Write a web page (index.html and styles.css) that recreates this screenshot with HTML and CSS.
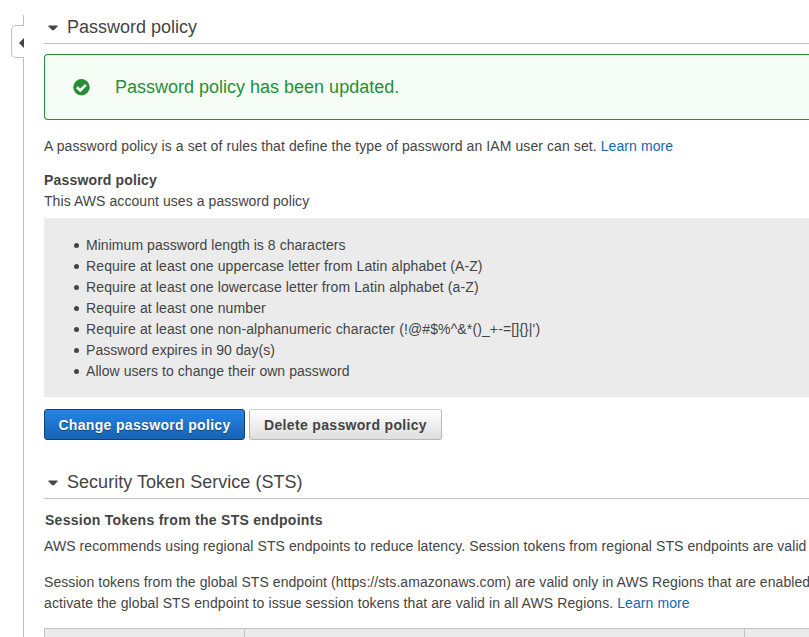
FILE: index.html
```html
<!DOCTYPE html>
<html lang="en">
<head>
<meta charset="utf-8">
<title>Account settings</title>
<link rel="stylesheet" href="styles.css">
</head>
<body>
<div class="page">
  <aside class="rail">
    <div class="rail-top"></div>
    <div class="rail-toggle"><svg width="5" height="10" viewBox="0 0 5 10"><path d="M5 0v10L0 5z" fill="#444"/></svg></div>
    <div class="rail-line"></div>
  </aside>
  <main class="content">
    <h2 class="section-title"><svg class="caret" width="10" height="6" viewBox="0 0 10 6"><path d="M.5 .5h9v1L5.800 5.300H4.200L.5 1.500z" fill="#444"/></svg><span>Password policy</span></h2>
    <div class="alert">
      <svg class="check" width="17" height="17" viewBox="0 0 17 17"><circle cx="8.500" cy="8.200" r="8.200" fill="#258f35"/><path d="M3.900 8.300l3.300 3.200 5.700-5.700" fill="none" stroke="#f6fdf6" stroke-width="2.600"/></svg>
      <span>Password policy has been updated.</span>
    </div>
    <p class="intro">A password policy is a set of rules that define the type of password an IAM user can set. <a>Learn more</a></p>
    <h3 class="label policy-label">Password policy</h3>
    <p class="uses">This AWS account uses a password policy</p>
    <ul class="rules">
      <li class="snug">Minimum password length is 8 characters</li>
      <li>Require at least one uppercase letter from Latin alphabet (A-Z)</li>
      <li>Require at least one lowercase letter from Latin alphabet (a-Z)</li>
      <li>Require at least one number</li>
      <li>Require at least one non-alphanumeric character (!@#$%^&amp;*()_+-=[]{}|')</li>
      <li class="snug">Password expires in 90 day(s)</li>
      <li class="snug">Allow users to change their own password</li>
    </ul>
    <div class="actions">
      <button class="btn primary">Change password policy</button>
      <button class="btn secondary">Delete password policy</button>
    </div>
    <h2 class="section-title sts-title"><svg class="caret" width="10" height="6" viewBox="0 0 10 6"><path d="M.5 .5h9v1L5.800 5.300H4.200L.5 1.500z" fill="#444"/></svg><span>Security Token Service (STS)</span></h2>
    <h3 class="label session-label">Session Tokens from the STS endpoints</h3>
    <p class="sts-intro">AWS recommends using regional STS endpoints to reduce latency. Session tokens from regional STS endpoints are valid</p>
    <p class="sts-global"><span class="sts-scope">Session tokens from the global STS endpoint (https://sts.amazonaws.com) are valid only in AWS Regions that are enabled</span><br>activate the global STS endpoint to issue session tokens that are valid in all AWS Regions. <a>Learn more</a></p>
    <div class="table-head"><div></div><div></div><div></div></div>
  </main>
</div>
</body>
</html>
```
FILE: styles.css
```css
* { box-sizing: border-box; }
body {
  margin: 0;
  height: 637px;
  overflow: hidden;
  background: #fff;
  color: #444;
  font: 14px/21px "Liberation Sans", Arial, sans-serif;
}
.page { display: flex; height: 637px; overflow: hidden; }
.rail { width: 24px; flex: none; display: flex; flex-direction: column; padding-top: 15px; }
.rail-top { height: 10px; border-right: 1px solid #c1c1c1; }
.rail-toggle {
  width: 13px;
  height: 33px;
  margin-left: 11px;
  border: 1px solid #c1c1c1;
  border-right: 0;
  border-radius: 5px 0 0 5px;
  display: flex;
  align-items: center;
  justify-content: flex-end;
  padding-top: 3px;
}
.rail-line { flex: 1; border-right: 1px solid #c1c1c1; }
.content { flex: 1; min-width: 0; margin-left: 20px; overflow: hidden; }
h2, h3, p, ul { margin: 0; padding: 0; white-space: nowrap; }
a { color: #1166bb; }
.section-title {
  display: flex;
  align-items: center;
  height: 44px;
  padding: 11px 0 0 4px;
  border-bottom: 1px solid #c1c1c1;
  font-size: 18px;
  font-weight: normal;
}
.caret { margin: 2px 9px 0 0; }
.alert {
  display: flex;
  align-items: center;
  height: 66px;
  margin-top: 10px;
  padding-left: 28px;
  border: 1px solid #258f35;
  border-right: 0;
  border-radius: 4px 0 0 4px;
  background: #f6fdf6;
  color: #258f35;
  font-size: 18px;
}
.check { margin-right: 25px; }
.intro { margin-top: 16px; letter-spacing: .09px; }
.label { font-size: 14px; }
.policy-label { margin-top: 13px; letter-spacing: .17px; }
.uses { letter-spacing: .07px; }
.rules {
  height: 179px;
  margin-top: 6px;
  padding: 17px 0 0 30px;
  background: #ebebeb;
  list-style: none;
  letter-spacing: .12px;
}
.rules li { display: flex; align-items: center; }
.rules li::before {
  content: "";
  width: 5px;
  height: 5px;
  margin-right: 7px;
  border-radius: 50%;
  background: #444;
}
.rules .snug { letter-spacing: .05px; }
.actions { display: flex; gap: 4px; margin-top: 12px; }
.btn {
  height: 31px;
  padding: 0;
  border-radius: 3px;
  font: bold 14px "Liberation Sans", Arial, sans-serif;
  letter-spacing: .33px;
}
.primary {
  width: 201px;
  border: 1px solid #124070;
  background: linear-gradient(#2585e6, #1763b5);
  color: #fff;
  text-shadow: 0 1px 1px #124070;
}
.secondary {
  width: 193px;
  border: 1px solid #b7b7b7;
  border-top-color: #cfcfcf;
  background: linear-gradient(#fff, #dedede);
  color: #444;
}
.sts-title { margin-top: 15px; letter-spacing: .03px; }
.session-label { margin-top: 11px; padding-left: 1px; letter-spacing: .28px; }
.sts-intro { margin-top: 5px; letter-spacing: .08px; }
.sts-global { margin-top: 15px; letter-spacing: .095px; }
.sts-scope { letter-spacing: .067px; }
.table-head {
  display: grid;
  grid-template-columns: 200px 500px 1fr;
  height: 30px;
  margin-top: 14px;
  border: 1px solid #c1c1c1;
  border-right: 0;
  background: #ebebeb;
}
.table-head div + div { border-left: 1px solid #c1c1c1; margin-left: -1px; }
```
